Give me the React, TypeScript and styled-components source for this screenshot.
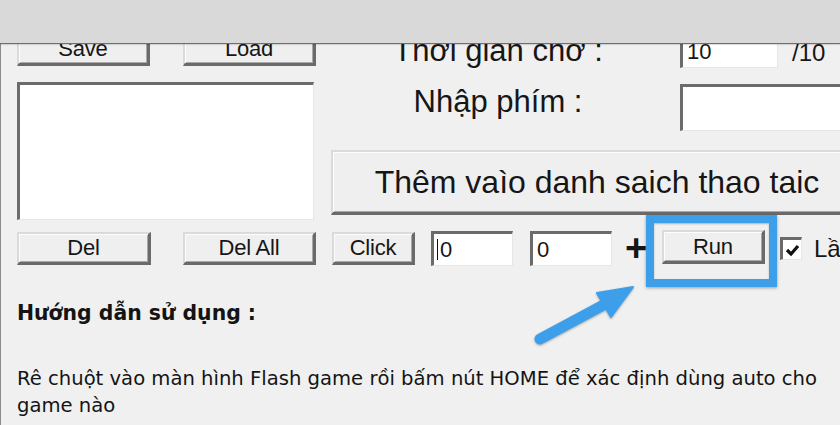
import React from "react";
import styled, { createGlobalStyle } from "styled-components";

const GlobalStyle = createGlobalStyle`
  html, body { margin: 0; padding: 0; background: #f0f0f0; }
  #root { width: 840px; height: 425px; overflow: hidden; }
  * { box-sizing: border-box; }
`;

const Page = styled.div`
  width: 840px;
  height: 425px;
  display: flex;
  flex-direction: column;
  overflow: hidden;
  font-family: "Liberation Sans", Arial, sans-serif;
  color: #161616;
`;

const TopBar = styled.div`
  flex: 0 0 44px;
  background: #d9d9d9;
  border-bottom: 1px solid #6e6e6e;
  box-shadow: 0 1px 1px rgba(0, 0, 0, 0.12);
  position: relative;
  z-index: 1;
`;

const Window = styled.div`
  flex: 1;
  position: relative;
  overflow: hidden;
  background: #f0f0f0;
  border-left: 1px solid #8c8c8c;
`;

const Inner = styled.div`
  margin-top: -11px;
  padding-left: 16px;
  width: 900px;
`;

const TopSection = styled.div`
  display: flex;
  align-items: flex-start;
  gap: 15px;
`;

const LeftCol = styled.div`
  width: 299px;
  flex: 0 0 auto;
  display: flex;
  flex-direction: column;
`;

const ButtonRow = styled.div`
  display: flex;
  justify-content: space-between;
`;

const Button = styled.button<{ $w: number; $h?: number; $ml?: number; $mt?: number; $size?: number }>`
  width: ${(p) => p.$w}px;
  height: ${(p) => p.$h ?? 33}px;
  margin: ${(p) => p.$mt ?? 0}px 0 0 ${(p) => p.$ml ?? 0}px;
  flex: 0 0 auto;
  padding: 0;
  display: flex;
  align-items: center;
  justify-content: center;
  background: #efefef;
  border-style: solid;
  border-width: 2px 3px 3px 2px;
  border-color: #dadada #6a6a6a #6a6a6a #dadada;
  box-shadow: inset 1px 1px 0 #fdfdfd, inset -1px -1px 0 #a8a8a8;
  font-family: "Liberation Sans", Arial, sans-serif;
  font-size: ${(p) => p.$size ?? 22}px;
  color: #161616;
  white-space: nowrap;
  letter-spacing: -0.2px;
`;

const ListBox = styled.div`
  margin-top: 16px;
  width: 297px;
  height: 138px;
  background: #fff;
  border-style: solid;
  border-width: 3px 1px 1px 3px;
  border-color: #6b6b6b #e6e6e6 #e6e6e6 #6b6b6b;
`;

const RightCol = styled.div`
  width: 533px;
  flex: 0 0 auto;
  display: flex;
  flex-direction: column;
`;

const FieldRow = styled.div<{ $mt?: number }>`
  display: flex;
  align-items: flex-start;
  margin-top: ${(p) => p.$mt ?? 0}px;
`;

const Label = styled.div`
  width: 334px;
  flex: 0 0 auto;
  margin-right: 15px;
  text-align: center;
  font-size: 31px;
  line-height: 1.15;
  white-space: nowrap;
`;

const Field = styled.div<{ $w: number; $h: number; $ml?: number; $mt?: number; $pl?: number }>`
  width: ${(p) => p.$w}px;
  height: ${(p) => p.$h}px;
  margin: ${(p) => p.$mt ?? 0}px 0 0 ${(p) => p.$ml ?? 0}px;
  flex: 0 0 auto;
  background: #fff;
  border-style: solid;
  border-width: 3px 1px 1px 3px;
  border-color: #6b6b6b #e6e6e6 #e6e6e6 #6b6b6b;
  padding-left: ${(p) => p.$pl ?? 4}px;
  display: flex;
  align-items: center;
  font-size: 22px;
  color: #161616;
`;

const Caret = styled.span`
  display: inline-block;
  width: 1px;
  height: 21px;
  background: #111;
  margin: 0 2px 0 -3px;
`;

const Suffix = styled.div`
  margin-left: 14px;
  padding-top: 2px;
  font-size: 24px;
  line-height: 35px;
  white-space: nowrap;
`;

const BigButton = styled(Button)`
  margin-top: 19px;
  letter-spacing: 0;
`;

const ControlsRow = styled.div`
  display: flex;
  align-items: flex-start;
  margin-top: 12px;
`;

const Plus = styled.div`
  margin-left: 12px;
  width: 24px;
  font-size: 38px;
  font-weight: bold;
  line-height: 32px;
  text-align: center;
`;

const CheckBox = styled.div`
  margin: 5px 0 0 15px;
  width: 22px;
  height: 23px;
  flex: 0 0 auto;
  background: #fff;
  border-style: solid;
  border-width: 3px 1px 1px 3px;
  border-color: #6b6b6b #e6e6e6 #e6e6e6 #6b6b6b;
  display: flex;
  align-items: center;
  justify-content: center;
`;

const CheckLabel = styled.div`
  margin-left: 12px;
  font-size: 24px;
  line-height: 33px;
  white-space: nowrap;
`;

const HelpTitle = styled.div`
  margin-top: 35px;
  font-family: "DejaVu Sans", Verdana, sans-serif;
  font-weight: bold;
  font-size: 20.4px;
  color: #141414;
`;

const HelpText = styled.p`
  margin: 40px 0 0 0;
  width: 822px;
  font-family: "DejaVu Sans", Verdana, sans-serif;
  font-size: 19.6px;
  line-height: 27px;
  color: #141414;
`;

const Highlight = styled.div`
  position: absolute;
  left: 645px;
  top: 171px;
  width: 131px;
  height: 72px;
  border: 8px solid #3d9fea;
  box-shadow: 0 1px 3px rgba(0, 0, 0, 0.35), inset 0 1px 2px rgba(0, 0, 0, 0.25);
  pointer-events: none;
`;

const ArrowSvg = styled.svg`
  position: absolute;
  left: 524px;
  top: 236px;
  overflow: visible;
  filter: drop-shadow(0 1px 1px rgba(0, 0, 0, 0.3));
`;

export default function App() {
  return (
    <>
      <GlobalStyle />
      <Page>
        <TopBar />
        <Window>
          <Inner>
            <TopSection>
              <LeftCol>
                <ButtonRow>
                  <Button $w={133}>Save</Button>
                  <Button $w={133}>Load</Button>
                </ButtonRow>
                <ListBox />
              </LeftCol>
              <RightCol>
                <FieldRow>
                  <Label>Thời gian chờ :</Label>
                  <Field $w={98} $h={35} $pl={4}>10</Field>
                  <Suffix>/10</Suffix>
                </FieldRow>
                <FieldRow $mt={14}>
                  <Label>Nhập phím :</Label>
                  <Field $w={200} $h={47} />
                </FieldRow>
                <BigButton $w={533} $h={65} $size={32}>
                  Thêm vaìo danh saich thao taic
                </BigButton>
              </RightCol>
            </TopSection>
            <ControlsRow>
              <Button $w={134}>Del</Button>
              <Button $w={133} $ml={32}>Del All</Button>
              <Button $w={83} $ml={16}>Click</Button>
              <Field $w={82} $h={35} $ml={16} $mt={-1} $pl={6}>
                <Caret />0
              </Field>
              <Field $w={82} $h={35} $ml={17} $mt={-1} $pl={4}>0</Field>
              <Plus>+</Plus>
              <Button $w={103} $h={34} $ml={14} $mt={-2}>Run</Button>
              <CheckBox>
                <svg width="15" height="14" viewBox="0 0 15 14">
                  <path d="M2 7 L6 11 L13 3" fill="none" stroke="#111" strokeWidth="3.2" />
                </svg>
              </CheckBox>
              <CheckLabel>Lần lặp</CheckLabel>
            </ControlsRow>
            <HelpTitle>Hướng dẫn sử dụng :</HelpTitle>
            <HelpText>
              Rê chuột vào màn hình Flash game rồi bấm nút HOME để xác định dùng auto cho game nào
            </HelpText>
          </Inner>
          <Highlight />
          <ArrowSvg width="115" height="65" viewBox="0 0 115 65">
            <line x1="15" y1="59" x2="84" y2="22" stroke="#3d9fea" strokeWidth="11" strokeLinecap="round" />
            <polygon points="108,7 72,13 86,37" fill="#3d9fea" stroke="#3d9fea" strokeWidth="2" strokeLinejoin="round" />
          </ArrowSvg>
        </Window>
      </Page>
    </>
  );
}
